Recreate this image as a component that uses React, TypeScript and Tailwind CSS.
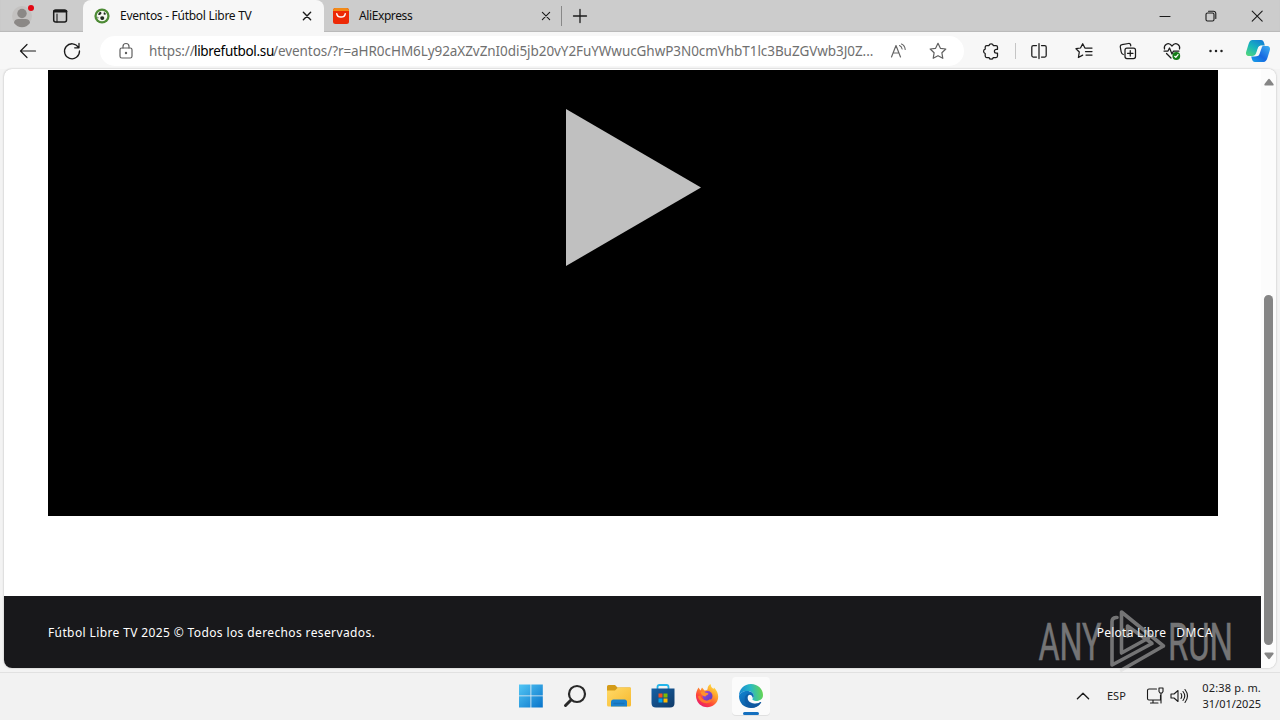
import type { ReactNode, SVGProps } from 'react';

function Icon({ children, size = 20, ...rest }: { children: ReactNode; size?: number } & SVGProps<SVGSVGElement>) {
  return (
    <svg width={size} height={size} viewBox="0 0 20 20" fill="none" stroke="#1b1b1b" strokeWidth="1.1" strokeLinecap="round" strokeLinejoin="round" className="shrink-0" {...rest}>
      {children}
    </svg>
  );
}

function Cell({ children }: { children: ReactNode }) {
  return <div className="flex h-full w-11 shrink-0 items-center justify-center">{children}</div>;
}

function TitleBar() {
  return (
    <div className="flex h-8 shrink-0 bg-[#cccccc] shadow-[inset_0_-1px_1px_#b8b8b8]">
      <div className="flex w-[83px] items-center rounded-br-md pl-3">
        <svg width="24" height="28" viewBox="0 0 24 28">
          <circle cx="10" cy="14" r="10" fill="#c3c1c0" />
          <circle cx="10" cy="11.5" r="4.7" fill="#8b8886" />
          <path d="M2 21c0-2.500 2-4 4.500-4h7c2.500 0 4.500 1.500 4.500 4-2 2.800-5 4.200-8 4.200S4 23.800 2 21z" fill="#8b8886" />
          <circle cx="19" cy="6" r="3" fill="#e30613" />
        </svg>
        <Icon className="ml-[14px]" strokeWidth="1.500">
          <rect x="3.700" y="4" width="12.800" height="12" rx="2" />
          <path d="M4.500 5.200h11.500" strokeWidth="2.600" />
          <path d="M7 8v8" strokeWidth="1.100" />
        </Icon>
      </div>
      <div className="flex w-[241px] items-center rounded-t-lg bg-[#f7f7f7] pl-[11px] pr-[10px]">
        <svg width="16" height="16" viewBox="0 0 16 16">
          <circle cx="8" cy="8" r="7.600" fill="#4d8a35" />
          <circle cx="8" cy="8" r="5.300" fill="#f4f7f1" />
          <path d="M5 4.500l2-.8.500 1.800L6 7l-2-.3zM10 4l1.800 1.500-.5 1.500-1.800-.7zM6.800 8.500l2.400-.3 1.200 1.800-1.200 2-2.200-.2-.8-1.700zM3.200 8.500l1.300 1-.5 1.300z" fill="#202920" />
        </svg>
        <span className="ml-[10px] whitespace-nowrap text-[12px] tracking-[-0.28px] text-[#101010]">Eventos - Fútbol Libre TV</span>
        <Icon size={14} className="ml-auto" strokeWidth="2"><path d="M4.800 4.800l10.400 10.400M15.200 4.800L4.800 15.200" /></Icon>
      </div>
      <div className="flex w-[237px] items-center pl-[9px] pr-[8px]">
        <svg width="16" height="16" viewBox="0 0 16 16">
          <rect width="16" height="16" rx="2.500" fill="#ed2906" />
          <path d="M0 2.500A2.500 2.500 0 0 1 2.500 0h11A2.500 2.500 0 0 1 16 2.500V3H0z" fill="#f28a17" />
          <path d="M3.800 5.800c.8 4.300 7.600 4.300 8.400 0" fill="none" stroke="#fff" strokeWidth="1.500" strokeLinecap="round" />
        </svg>
        <span className="ml-[10px] text-[12px] tracking-[-0.4px] text-[#101010]">AliExpress</span>
        <Icon size={14} className="ml-auto" strokeWidth="1.600"><path d="M4.800 4.800l10.400 10.400M15.200 4.800L4.800 15.200" /></Icon>
      </div>
      <div className="mt-[6px] h-5 w-px bg-[#888]" />
      <div className="flex w-[35px] items-center justify-center"><Icon size={20}><path d="M10 3.500v13M3.500 10h13" strokeWidth="1.300" /></Icon></div>
      <div className="ml-auto flex">
        <div className="flex w-[46px] items-center justify-center"><Icon><path d="M5 10.500h10" /></Icon></div>
        <div className="flex w-[46px] items-center justify-center"><Icon><rect x="5" y="7" width="8" height="8" rx="1.500" /><path d="M7.500 5.200h5a2.300 2.300 0 0 1 2.300 2.300v5" /></Icon></div>
        <div className="flex w-[46px] items-center justify-center"><Icon><path d="M5.200 5.200l10 10M15.200 5.200l-10 10" /></Icon></div>
      </div>
    </div>
  );
}

function Toolbar() {
  return (
    <div className="flex h-[37px] shrink-0 items-center bg-[#f7f7f7] pl-[6px] pt-px">
      <Cell><Icon><path d="M17.500 10H2.500M9 3.500L2.500 10 9 16.500" strokeWidth="1.200" /></Icon></Cell>
      <Cell><Icon><path d="M16.500 6.500A7.500 7.500 0 1 0 17.500 10M17 2.500v4.300h-4.300" strokeWidth="1.300" /></Icon></Cell>
      <div className="ml-[6px] flex h-[30px] w-[864px] shrink-0 items-center rounded-full bg-white">
        <Icon className="ml-4 shrink-0" stroke="#606060" strokeWidth="1.200"><rect x="4" y="7" width="12" height="10" rx="1.800" /><path d="M7 7V5.500a3 3 0 0 1 6 0V7" /><circle cx="10" cy="12" r=".6" fill="#606060" /></Icon>
        <div className="ml-[13px] flex w-[725px] whitespace-nowrap text-[13.5px] leading-5 text-[#707070]">
          <span className="w-[45px] tracking-[-0.12px]">https://</span>
          <span className="w-[79px] tracking-[-0.32px] text-black">librefutbol.su</span>
          <span className="tracking-[-0.065px]">/eventos/?r=aHR0cHM6Ly92aXZvZnI0di5jb20vY2FuYWwucGhwP3N0cmVhbT1lc3BuZGVwb3J0Z...</span>
        </div>
        <Icon className="ml-[14px]" stroke="#666666"><path d="M3.500 16L8 4.500 12.500 16M5 12h6" strokeWidth="1.200" /><path d="M11.500 4.500c1.500.6 2.400 2 2.600 3.500M13.500 3c2.200 1 3.500 3 3.700 5.500" /></Icon>
        <Icon className="ml-[20px]" stroke="#606060"><path d="M10 2.300l2.400 5 5.400.7-3.900 3.800.9 5.500-4.800-2.600-4.800 2.600.9-5.500L2.200 8l5.400-.7z" strokeWidth="1.200" /></Icon>
      </div>
      <div className="ml-[5px] flex h-full items-center">
        <Cell><Icon strokeWidth="1.250"><path d="M5.700 4.500H8a2.200 2.200 0 0 1 4.300 0H15A1.500 1.500 0 0 1 16.500 6v2.300h-1.200a1.900 1.900 0 0 0 0 3.800h1.200V15a1.500 1.500 0 0 1-1.500 1.500h-2.700a2.200 2.200 0 0 1-4.300 0H5.700A1.500 1.500 0 0 1 4.200 15v-2.500a2.300 2.300 0 0 1 0-4.400V6a1.500 1.500 0 0 1 1.500-1.500z" /></Icon></Cell>
        <div className="ml-[2px] mr-px h-4 w-px bg-[#c5c5c5]" />
        <Cell><Icon strokeWidth="1.250"><path d="M7.500 4.500H4.300A1.500 1.500 0 0 0 2.800 6v8.500A1.500 1.500 0 0 0 4.300 16h3.200M12.500 4.500h3.200A1.500 1.500 0 0 1 17.200 6v8.500a1.500 1.500 0 0 1-1.500 1.500h-3.200M10 2.500v15" /></Icon></Cell>
        <div className="w-px" />
        <Cell><Icon strokeWidth="1.250"><path d="M11.700 7h-.8L8.700 2.700 6.500 7 2 7.700 5.300 11l-.9 5.500 4.300-2.400M12.500 7H18M11.500 10.500H18M12 14h6" /></Icon></Cell>
        <Cell><Icon strokeWidth="1.250"><rect x="7" y="7" width="10.500" height="10.500" rx="2" /><path d="M12.250 9.500v5.500M9.500 12.250H15M5.300 13.500C4 13.200 3.400 12 3.200 11L2.300 6a2 2 0 0 1 1.700-2.300l6.500-1.200A2 2 0 0 1 12.700 4v.8" /></Icon></Cell>
        <Cell><Icon strokeWidth="1.250"><path d="M2.500 8C1.500 4.500 6-.3 10 5c4-5.300 8.500-.5 7.500 3M2 10h4l1.500-3 2.500 6 1.500-3H17M4.500 12.500l4.500 4.500" /><circle cx="14.300" cy="15" r="3.900" fill="#157c18" stroke="none" /><path d="M12.700 15.300l1.100 1 2.200-2.700" stroke="#fff" /></Icon></Cell>
        <Cell><svg width="20" height="20" viewBox="0 0 20 20" fill="#222"><circle cx="4.500" cy="10" r="1.250" /><circle cx="10" cy="10" r="1.250" /><circle cx="15.500" cy="10" r="1.250" /></svg></Cell>
        <svg width="26" height="26" viewBox="0 0 26 26" className="ml-[7px] shrink-0">
          <defs>
            <linearGradient id="cpA" x1=".1" y1="1" x2=".8" y2="0"><stop stopColor="#53d77b" /><stop offset=".5" stopColor="#18b5bc" /><stop offset="1" stopColor="#137ed5" /></linearGradient>
            <linearGradient id="cpB" x1="0" y1="1" x2="1" y2="0"><stop stopColor="#18a4e8" /><stop offset=".45" stopColor="#1668e1" /><stop offset="1" stopColor="#3fb2f2" /></linearGradient>
          </defs>
          <path d="M7.500 2H16c2 0 2.700 1.500 3.100 3l.7 2.500h-3.300c-2 0-3.200 1-3.800 3l-1.500 4.500c-.7 2-2 3-4 3H4.300c-3 0-3.800-2-3.100-4.300l2.300-7.500C4.300 3.500 5.500 2 7.500 2z" fill="url(#cpA)" />
          <path d="M18.500 8h3.200c3 0 3.800 2 3.100 4.300l-2.300 7.500c-.8 2.700-2 4.200-4 4.200H10c-2 0-2.700-1.500-3.100-3l-.7-2.500h3.300c2 0 3.200-1 3.800-3l1.500-4.500c.7-2 1.700-3 3.700-3z" fill="url(#cpB)" />
          <path d="M13.500 9.500c.6-1.200 1.500-1.700 2.900-1.700h1l-2.900 8.200c-.6 1.600-1.500 2.200-3 2.200h-1z" fill="#f7f7f7" />
        </svg>
      </div>
    </div>
  );
}

function Watermark() {
  return (
    <svg className="pointer-events-none absolute left-[1030px] top-[600px]" width="210" height="80" viewBox="1030 600 210 80" opacity=".48">
      <g fill="#d8d8d8" stroke="#d8d8d8" strokeWidth=".5" fontFamily="Roboto" fontWeight="400" fontSize="52.500">
        <text x="1038.5" y="659.5" textLength="63" lengthAdjust="spacingAndGlyphs">ANY</text>
        <text x="1168" y="659.5" textLength="65" lengthAdjust="spacingAndGlyphs">RUN</text>
      </g>
      <path d="M1117 617.500h-1q-4 .5-4 4V665l40-21.500M1121.500 653V612l42 34-42 24M1121.500 653l27-15M1127.500 636v-10l24 17" fill="none" stroke="#d8d8d8" strokeWidth="3.600" strokeLinejoin="round" strokeLinecap="round" />
    </svg>
  );
}

function Page() {
  return (
    <div className="mx-1 flex h-[599px] shrink-0 overflow-hidden rounded-lg bg-white shadow-[0_0_2px_#aaaaaa]">
      <main className="flex w-[1257px] flex-col">
        <div className="ml-11 mt-px flex h-[446px] w-[1170px] bg-black pl-[518px] pt-[39px]">
          <svg width="135" height="157" viewBox="0 0 135 157"><path d="M0 0l135 78.500L0 157z" fill="#c0c0c0" /></svg>
        </div>
        <footer className="mt-20 flex h-[72px] items-center justify-between bg-[#18181b] pl-11 pr-12 pt-[2px] text-[12px] text-white">
          <span className="tracking-[0.38px]">Fútbol Libre TV 2025 © Todos los derechos reservados.</span>
          <div className="flex gap-[10px]"><span className="tracking-[0.22px]">Pelota Libre</span><span className="tracking-[0.45px]">DMCA</span></div>
        </footer>
      </main>
      <div className="flex w-[15px] flex-col items-center bg-[#fcfcfc] pt-[9px]">
        <svg width="10" height="8" viewBox="0 0 10 8"><path d="M4 1.500Q5 0 6 1.500L9.500 6q.5 1.500-1 1.500h-7Q0 7.500.5 6z" fill="#858585" /></svg>
        <div className="mt-[209px] h-[350px] w-[9px] rounded-full bg-[#858585]" />
        <svg className="mt-[7px]" width="10" height="8" viewBox="0 0 10 8"><path d="M4 6.500Q5 8 6 6.500L9.500 2Q10 .5 8.500.5h-7Q0 .5.500 2z" fill="#858585" /></svg>
      </div>
    </div>
  );
}

function Windows() {
  return (
    <svg width="24" height="24" viewBox="0 0 24 24">
      <defs><linearGradient id="win" x1="0" y1="0" x2="1" y2="1"><stop stopColor="#53c7f5" /><stop offset="1" stopColor="#0873ca" /></linearGradient></defs>
      <path d="M0 .5h11.500v11H0V1zM12.300.500h11.500v11H12.300zM0 12.300h11.500v11.200H0zM12.300 12.300h11.500v11.200H12.300z" fill="url(#win)" />
    </svg>
  );
}

function Explorer() {
  return (
    <svg width="26" height="24" viewBox="0 0 26 24">
      <defs><linearGradient id="folder" x1="0" y1="0" x2="1" y2="1"><stop stopColor="#ffda68" /><stop offset="1" stopColor="#f7b92f" /></linearGradient></defs>
      <path d="M1 2.500Q1 1 2.500 1H9l2.500 2.500H24Q25 3.500 25 5v10H1z" fill="#d49b18" />
      <path d="M1 6.500h8L12 3.500h12q1 0 1 1v16.500q0 1.500-1.500 1.500h-21Q1 22.500 1 21z" fill="url(#folder)" />
      <path d="M5 22.500V18q0-2.500 2.500-2.500h11Q21 15.500 21 18v4.500z" fill="#1981cd" />
      <path d="M8 19.500h10" stroke="#1571b8" strokeWidth="1.300" strokeLinecap="round" />
    </svg>
  );
}

function Store() {
  return (
    <svg width="24" height="26" viewBox="0 0 24 26">
      <defs><linearGradient id="store" x1="0" y1="0" x2="1" y2="1"><stop stopColor="#1460a5" /><stop offset="1" stopColor="#123b68" /></linearGradient></defs>
      <path d="M6.500 7V4q0-2 2-2h7q2 0 2 2v3" fill="none" stroke="#24b5ea" strokeWidth="1.800" />
      <path d="M.500 5.500h23V20q0 4.500-4.500 4.500H5Q.500 24.500.500 20z" fill="url(#store)" />
      <path d="M7.500 10.500h4v4h-4z" fill="#f25022" /><path d="M12.500 10.500h4v4h-4z" fill="#7fba00" /><path d="M7.500 15.500h4v4h-4z" fill="#00a4ef" /><path d="M12.500 15.500h4v4h-4z" fill="#ffb900" />
    </svg>
  );
}

function Firefox() {
  return (
    <svg width="24" height="26" viewBox="0 0 24 26">
      <defs>
        <linearGradient id="fox" x1=".9" y1="0" x2=".2" y2="1"><stop stopColor="#fff044" /><stop offset=".4" stopColor="#ff9a2c" /><stop offset=".7" stopColor="#ff4639" /><stop offset="1" stopColor="#e41674" /></linearGradient>
        <linearGradient id="foxBall" x1="0" y1="0" x2="1" y2="1"><stop stopColor="#a348dd" /><stop offset="1" stopColor="#553bc0" /></linearGradient>
      </defs>
      <path d="M3.500 4.500l2 3 1.500-3 2.500 3q2 0 3-1 0-4 3-5.500 0 3 3 5l.500-1.500c6 6 5 13.500.5 17-6 5-15 2.500-17.500-4C0 13 1 8.500 3.500 4.500z" fill="url(#fox)" />
      <circle cx="12.500" cy="13" r="5" fill="url(#foxBall)" />
      <path d="M5.500 9c2-1.500 4-.5 5 .7 1.500 0 3 .3 3 1.300-1 1.500-3 1-3 2.500-2 0-4-1-5-4.500z" fill="#ff912c" />
      <path d="M4 13c2 6 8 7.500 12 4" fill="none" stroke="#ff782c" strokeWidth="2.500" />
    </svg>
  );
}

function Edge() {
  return (
    <svg width="26" height="26" viewBox="0 0 26 26">
      <defs>
        <linearGradient id="edgeTop" x1="0" y1=".5" x2="1" y2=".4"><stop stopColor="#1686d2" /><stop offset=".5" stopColor="#29b9c5" /><stop offset="1" stopColor="#68d64c" /></linearGradient>
        <linearGradient id="edgeLow" x1="0" y1="0" x2="1" y2="1"><stop stopColor="#1187d4" /><stop offset="1" stopColor="#0c4589" /></linearGradient>
      </defs>
      <path d="M1 13C1 6 6 1 13 1s12 5 12 11c0 4-3 6-7 6-3 0-4.500-1-3.500-2.500 1-1 1.300-1.600 1.300-2.500 0-3-3-5-6.500-5C5 8 2 10 1 13z" fill="url(#edgeTop)" />
      <path d="M1 13c1-3 4-5 8-5 4 0 6.800 2.200 6.800 5 0 .9-.3 1.500-1.300 2.500-.2-2-1.200-3.500-2.700-3.700C10.200 12 9.500 13.300 9.500 14.800c0 4 4.500 7.200 9.500 5.700 1.500-.4 3-1.200 3.800-1.500.5 0 .5.300.2.700C20.500 23.500 17 25 13 25 6 25 1 20 1 13z" fill="url(#edgeLow)" />
      <path d="M11.500 10.500c-2.800.2-4.800 2.200-4.800 5.500 0 4.500 3 8.300 7.300 9 3.700-.2 6.800-2 9-5.300.3-.5 0-.7-.4-.5C17 22 9.500 20 9.500 14.800c0-1.300.7-2.700 2-3.100z" fill="#0d58a2" opacity=".7" />
      <path d="M10.200 13.500c.5-1.500 2-2 3.200-1 1.100 1 1.300 2 1.100 3-.8 1.500.5 2.500 3.500 2.500 2 0 3.700-.5 5-1.500-1 2.400-3.500 3.100-5.700 3-4-.1-7.300-2.500-7.100-6z" fill="#f8fbfc" />
    </svg>
  );
}

function Taskbar() {
  return (
    <div className="mt-auto flex h-12 shrink-0 items-center border-t border-[#e1e1e1] bg-[#f2f2f2] pb-[2px] pl-[509px]">
      <Cell><Windows /></Cell>
      <Cell><svg width="24" height="24" viewBox="0 0 24 24" fill="none" stroke="#292929" strokeLinecap="round"><circle cx="14" cy="10" r="8" strokeWidth="2.200" /><path d="M8 16l-5.500 5.500" strokeWidth="3" /></svg></Cell>
      <Cell><Explorer /></Cell>
      <Cell><Store /></Cell>
      <Cell><Firefox /></Cell>
      <Cell>
        <div className="flex h-[38px] w-[38px] flex-col items-center rounded bg-[#fbfbfb] pt-[6px] shadow-[0_1px_0_#e0e0e0]">
          <Edge />
          <div className="mt-[3px] h-[3px] w-4 rounded-full bg-[#1570bf]" />
        </div>
      </Cell>
      <div className="ml-auto mr-[19px] flex items-center text-[11px] text-[#202020]">
        <Icon size={16}><path d="M3 13.500l7-7 7 7" strokeWidth="1.700" /></Icon>
        <span className="ml-[16px] w-5 pt-[2px]">ESP</span>
        <Icon className="ml-[18px]"><path d="M11.500 3H4Q2.500 3 2.500 4.500v8Q2.500 14 4 14h11.500V9M8 14v3M5.500 17H13M14 2h4v3.500l-1 1.500h-2l-1-1.500zM16 7v10" /></Icon>
        <Icon className="ml-[4px]"><path d="M2 8v4h3l4 3.500v-11L5 8zM12 7.500q1.500 2.500 0 5M14 5.500q3.500 4.500 0 9M16 3.500q5 6.500 0 13" /></Icon>
        <div className="ml-[12px] w-[60px] whitespace-nowrap text-right leading-4"><div className="tracking-[0.18px]">02:38 p. m.</div><div>31/01/2025</div></div>
      </div>
    </div>
  );
}

export default function App() {
  return (
    <div className="relative flex h-[720px] w-[1280px] flex-col overflow-hidden bg-[#f3f3f3] font-['Noto_Sans',sans-serif]">
      <TitleBar />
      <Toolbar />
      <Page />
      <Taskbar />
      <Watermark />
    </div>
  );
}
